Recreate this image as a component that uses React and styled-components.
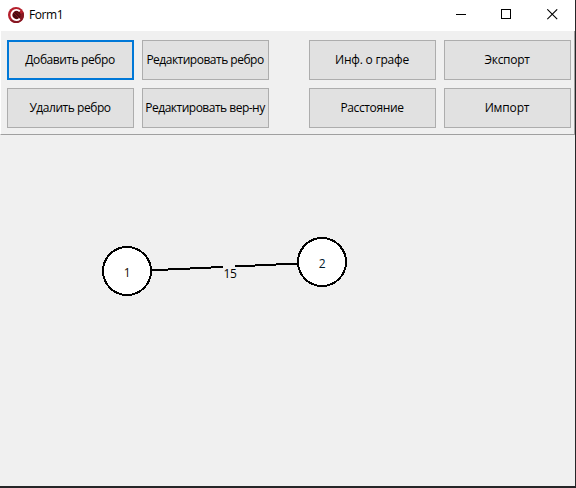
import React from 'react';
import styled, { createGlobalStyle } from 'styled-components';

const GlobalStyle = createGlobalStyle`
  * { box-sizing: border-box; }
  body { margin: 0; background: #262628; overflow: hidden; }
`;

const Window = styled.main`
  width: 576px;
  height: 488px;
  display: flex;
  flex-direction: column;
  background: #262628;
  font-family: "Open Sans", "Noto Sans", sans-serif;
  font-size: 12px;
  color: #000;
`;

const TitleBar = styled.header`
  width: 575px;
  height: 31px;
  flex: none;
  display: flex;
  align-items: center;
  padding: 0 1px 2px 8px;
  background: #fff;
`;

const Title = styled.span`
  flex: 1;
  margin-left: 5px;
  line-height: 16px;
  letter-spacing: -0.4px;
`;

const WindowButton = styled.button`
  width: 45px;
  height: 29px;
  padding: 0 0 0 ${(p) => p.$shift || 0}px;
  border: 0;
  background: transparent;
  display: grid;
  place-items: center;
  svg { display: block; }
`;

const Client = styled.div`
  flex: none;
  width: 575px;
  height: 455px;
  display: flex;
  flex-direction: column;
  background: #f0f0f0;
`;

const Toolbar = styled.nav`
  height: 104px;
  flex: none;
  display: flex;
  gap: 40px;
  padding: 9px 0 0 6px;
  border-left: 1px solid #fff;
  border-right: 1px solid #a0a0a0;
  border-bottom: 1px solid #a0a0a0;
`;

const ButtonGroup = styled.div`
  display: grid;
  grid-template-columns: 127px 127px;
  grid-template-rows: 40px 40px;
  gap: 8px;
`;

const ToolButton = styled.button`
  padding: 0 1px 0 0;
  border: ${(p) => (p.$focused ? '2px solid #0078d7' : '1px solid #adadad')};
  background: #e1e1e1;
  color: #000;
  font: inherit;
  line-height: 16px;
  letter-spacing: ${(p) => p.$spacing}px;
  white-space: nowrap;
  display: flex;
  align-items: center;
  justify-content: center;
`;

const Canvas = styled.svg`
  display: block;
  flex: none;
  text { font-size: 12px; text-anchor: middle; letter-spacing: -0.3px; }
`;

const groups = [
  [
    { label: 'Добавить ребро', focused: true, spacing: -0.43 },
    { label: 'Редактировать ребро', spacing: -0.5 },
    { label: 'Удалить ребро', spacing: -0.45 },
    { label: 'Редактировать вер-ну', spacing: -0.5 },
  ],
  [
    { label: 'Инф. о графе', spacing: -0.2 },
    { label: 'Экспорт', spacing: -0.3 },
    { label: 'Расстояние', spacing: -0.38 },
    { label: 'Импорт', spacing: -0.15 },
  ],
];

const nodes = [
  { id: 1, x: 127, y: 271, color: '#1a0a00' },
  { id: 2, x: 322, y: 262, color: '#001a2a' },
];

function AppIcon() {
  return (
    <svg width="16" height="16" viewBox="0 0 16 16">
      <circle cx="8" cy="8" r="8" fill="#b51f2c" />
      <path d="M2.3 13.6A8 8 0 0 0 16 8c0-1-.2-2-.5-2.8z" fill="#861722" />
      <circle cx="8.6" cy="8" r="4" fill="#4a0b11" />
      <path d="M11.8 4.3A5 5 0 1 0 11.8 11.7" fill="none" stroke="#fff" strokeWidth="2" />
      <path d="M6 6l5 5M8 4.5l4.5 4.5" stroke="#8b1b25" strokeWidth=".8" />
    </svg>
  );
}

export default function App() {
  return (
    <>
      <GlobalStyle />
      <Window>
        <TitleBar>
          <AppIcon />
          <Title>Form1</Title>
          <WindowButton aria-label="Minimize">
            <svg width="11" height="11" shapeRendering="crispEdges"><path d="M0 5.5h10" stroke="#000" /></svg>
          </WindowButton>
          <WindowButton aria-label="Maximize">
            <svg width="11" height="11" shapeRendering="crispEdges"><rect x=".5" y=".5" width="9" height="9" fill="none" stroke="#000" /></svg>
          </WindowButton>
          <WindowButton aria-label="Close" $shift={2}>
            <svg width="11" height="11"><path d="M.3.3l9.9 9.9M10.2.3L.3 10.2" stroke="#000" strokeWidth="1.1" /></svg>
          </WindowButton>
        </TitleBar>
        <Client>
          <Toolbar>
            {groups.map((group, i) => (
              <ButtonGroup key={i}>
                {group.map((b) => (
                  <ToolButton key={b.label} $focused={b.focused} $spacing={b.spacing}>{b.label}</ToolButton>
                ))}
              </ButtonGroup>
            ))}
          </Toolbar>
          <Canvas width="575" height="351" viewBox="0 135 575 351">
            <path d="M127 271.4L322 262.4" stroke="#000" strokeWidth="2" shapeRendering="crispEdges" />
            <rect x="223" y="265" width="12" height="16" fill="#f0f0f0" />
            <text x="230" y="278">15</text>
            {nodes.map((n) => (
              <g key={n.id}>
                <circle cx={n.x} cy={n.y} r="24" fill="#fff" stroke="#000" strokeWidth="2" shapeRendering="crispEdges" />
                <text x={n.x} y={n.y + 6} fill={n.color}>{n.id}</text>
              </g>
            ))}
          </Canvas>
        </Client>
      </Window>
    </>
  );
}
